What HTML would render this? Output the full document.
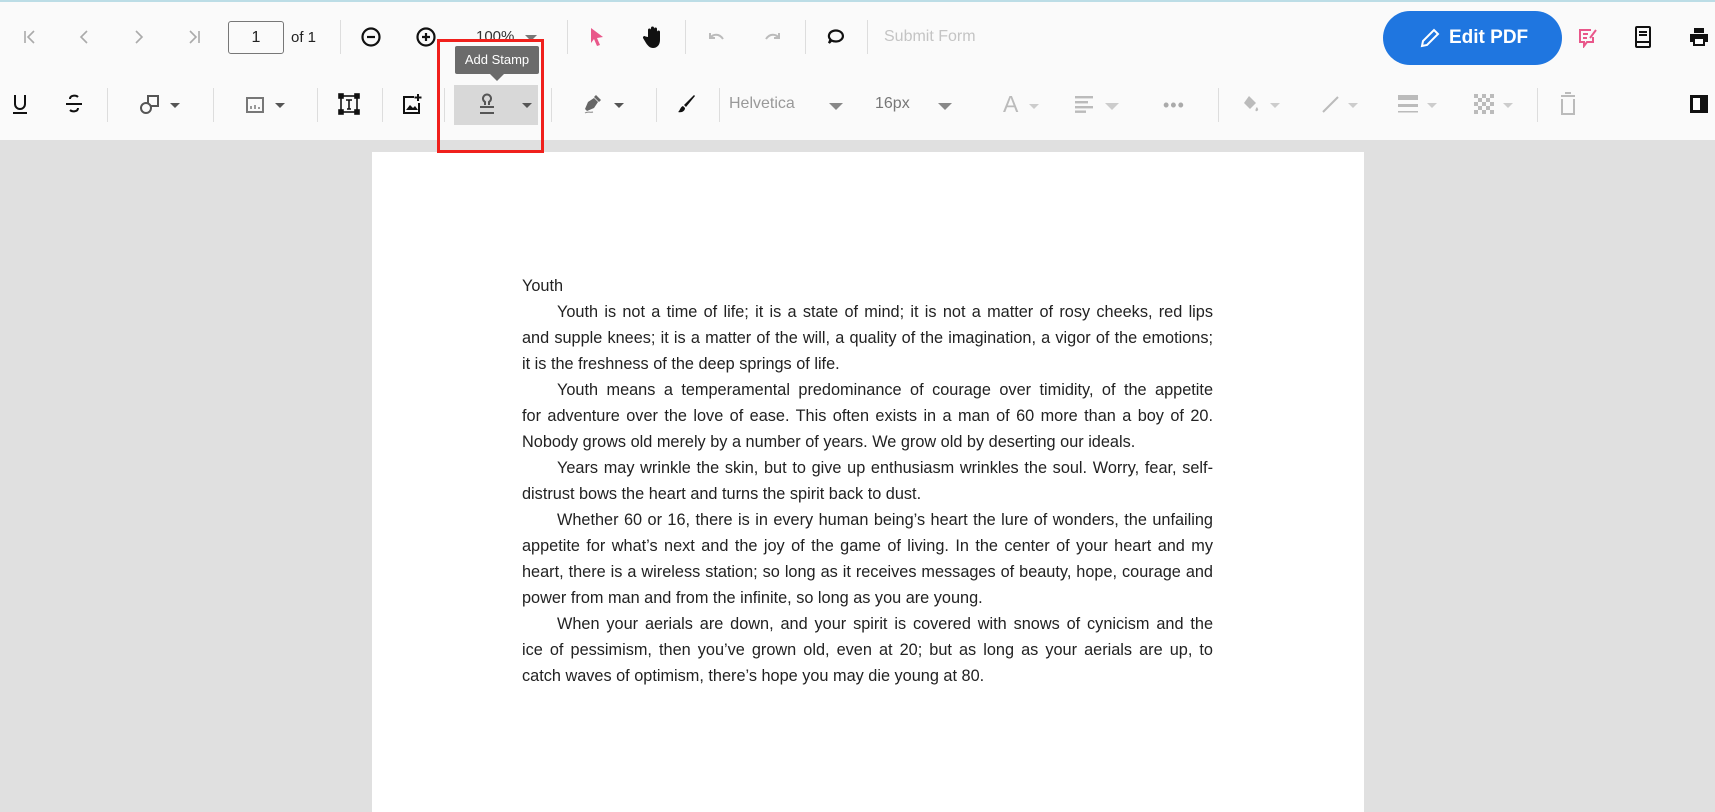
<!DOCTYPE html>
<html><head><meta charset="utf-8"><style>
*{margin:0;padding:0;box-sizing:border-box}
body{width:1715px;height:799px;overflow:hidden;background:#e0e0e0;font-family:"Liberation Sans",sans-serif;position:relative}
.tb{position:absolute;left:0;top:0;width:1715px;height:140px;background:#fafafa;border-top:2px solid #bcdde6}
.a{position:absolute}
.ic{position:absolute;transform:translate(-50%,-50%)}
.sep{position:absolute;width:1px;background:#ddd}
.tri{position:absolute;width:0;height:0;border-left:5px solid transparent;border-right:5px solid transparent;border-top:5px solid #555;transform:translateX(-50%)}
.page{position:absolute;left:372px;top:152px;width:992px;height:660px;background:#fff}
.ln{position:absolute;left:522px;width:691px;font-size:16.3px;color:#222;white-space:nowrap;text-align:justify;text-align-last:justify;line-height:20px}
.ln.l{text-align-last:left}
.ln.i{padding-left:35px}
.grey{color:#aaa}
</style></head><body>
<div class="tb">
<svg class="ic" style="left:30px;top:35px" width="16" height="16" viewBox="0 0 16 16" fill="none" stroke="#aaa" stroke-width="1.6"><path d="M3 2v12M12 2L6 8l6 6"/></svg>
<svg class="ic" style="left:84px;top:35px" width="16" height="16" viewBox="0 0 16 16" fill="none" stroke="#aaa" stroke-width="1.6"><path d="M11 2L5 8l6 6"/></svg>
<svg class="ic" style="left:139px;top:35px" width="16" height="16" viewBox="0 0 16 16" fill="none" stroke="#aaa" stroke-width="1.6"><path d="M5 2l6 6-6 6"/></svg>
<svg class="ic" style="left:194px;top:35px" width="16" height="16" viewBox="0 0 16 16" fill="none" stroke="#aaa" stroke-width="1.6"><path d="M13 2v12M4 2l6 6-6 6"/></svg>
<div class="a" style="left:228px;top:19px;width:56px;height:33px;border:1px solid #777;border-radius:3px;font-size:16px;text-align:center;line-height:31px;color:#222">1</div>
<div class="a" style="left:291px;top:27px;font-size:15px;color:#222">of 1</div>
<div class="sep" style="left:340px;top:18px;height:34px"></div>
<svg class="ic" style="left:371px;top:35px" width="22" height="22" viewBox="0 0 22 22" fill="none" stroke="#111" stroke-width="2.2"><circle cx="11" cy="11" r="8.5"/><path d="M7 11h8"/></svg>
<svg class="ic" style="left:426px;top:35px" width="22" height="22" viewBox="0 0 22 22" fill="none" stroke="#111" stroke-width="2.2"><circle cx="11" cy="11" r="8.5"/><path d="M7 11h8M11 7v8"/></svg>
<div class="a" style="left:476px;top:26px;font-size:15px;color:#333">100%</div>
<div class="tri" style="left:531px;top:33px;border-top-color:#777;border-width:6px 6px 0 6px"></div>
<div class="sep" style="left:567px;top:18px;height:34px"></div>
<svg class="ic" style="left:597px;top:35px" width="18" height="22" viewBox="0 0 18 22"><path d="M3 2l12 9-6 1 3 7-3 1-3-7-3 4z" fill="#e9578a"/></svg>
<svg class="ic" style="left:653px;top:35px" width="22" height="24" viewBox="0 0 22 24"><path d="M6 12V5a1.5 1.5 0 013 0v5V3a1.5 1.5 0 013 0v7V4a1.5 1.5 0 013 0v7V7a1.5 1.5 0 013 0v8c0 5-3 8-7 8-3 0-5-2-7-5l-3-5a1.5 1.5 0 012.5-1.5z" fill="#111"/></svg>
<div class="sep" style="left:685px;top:18px;height:34px"></div>
<svg class="ic" style="left:717px;top:35px" width="20" height="16" viewBox="0 0 20 16" fill="none" stroke="#bbb" stroke-width="2"><path d="M3 4v5h5M3 9c3-4 9-5 13 1"/></svg>
<svg class="ic" style="left:772px;top:35px" width="20" height="16" viewBox="0 0 20 16" fill="none" stroke="#bbb" stroke-width="2"><path d="M17 4v5h-5M17 9c-3-4-9-5-13 1"/></svg>
<div class="sep" style="left:805px;top:18px;height:34px"></div>
<svg class="ic" style="left:836px;top:35px" width="22" height="20" viewBox="0 0 22 20" fill="none" stroke="#111" stroke-width="2.2"><path d="M4 16l1.5-3.5A7 5.5 0 1111 14.5c-2 0-3.5-.5-4.5-1z"/></svg>
<div class="sep" style="left:867px;top:18px;height:34px"></div>
<div class="a grey" style="left:884px;top:26px;font-size:16px;color:#c4c4c4">Submit Form</div>
<div class="a" style="left:1383px;top:9px;width:179px;height:54px;border-radius:27px;background:#1f76e0;color:#fff;font-weight:bold;font-size:19px;line-height:54px;padding-left:66px">Edit PDF</div>
<svg class="ic" style="left:1430px;top:36px" width="24" height="24" viewBox="0 0 24 24" fill="none" stroke="#fff" stroke-width="2"><path d="M4 20l1-5L16 4l4 4L9 19z"/></svg>
<svg class="ic" style="left:1588px;top:35px" width="22" height="22" viewBox="0 0 22 22" fill="none" stroke="#e9578a" stroke-width="2"><path d="M14 4H3v12h4v4l3-4h6v-5M6 8h5M6 12h4M13 12l6-8"/></svg>
<svg class="ic" style="left:1643px;top:35px" width="18" height="24" viewBox="0 0 18 24" fill="none" stroke="#111" stroke-width="2"><rect x="2" y="2" width="14" height="20" rx="1"/><path d="M5 7h8M5 10h8M2 17h14"/></svg>
<svg class="ic" style="left:1699px;top:35px" width="22" height="22" viewBox="0 0 22 22"><path d="M6 2h10v5H6zM2 8h18v8h-3v4H5v-4H2z" fill="#111"/><rect x="7" y="13" width="8" height="5" fill="#fff"/></svg>
<svg class="ic" style="left:20px;top:102px" width="18" height="22" viewBox="0 0 18 22" fill="none" stroke="#111" stroke-width="2"><path d="M4 2v9a5 5 0 0010 0V2M2 20h14"/></svg>
<svg class="ic" style="left:74px;top:102px" width="20" height="22" viewBox="0 0 20 22" fill="none" stroke="#111" stroke-width="2"><path d="M14 4c-2-2-8-2-8 2M2 11h16M6 17c2 2 8 2 8-2"/></svg>
<div class="sep" style="left:107px;top:86px;height:34px"></div>
<svg class="ic" style="left:150px;top:102px" width="22" height="22" viewBox="0 0 22 22" fill="none" stroke="#555" stroke-width="2"><circle cx="7" cy="15" r="5"/><path d="M9 10V3h10v10h-7"/></svg>
<div class="tri" style="left:175px;top:101px"></div>
<div class="sep" style="left:213px;top:86px;height:34px"></div>
<svg class="ic" style="left:255px;top:103px" width="20" height="18" viewBox="0 0 20 18" fill="none" stroke="#777" stroke-width="2"><rect x="2" y="2" width="16" height="14"/><path d="M6 13v-3M10 13V9M14 13v-2" stroke-width="1.5"/></svg>
<div class="tri" style="left:280px;top:101px"></div>
<div class="sep" style="left:317px;top:86px;height:34px"></div>
<svg class="ic" style="left:349px;top:102px" width="22" height="22" viewBox="0 0 22 22" fill="none" stroke="#111" stroke-width="1.6"><rect x="3" y="3" width="16" height="16"/><path d="M8 7h6M11 7v9M9 16h4"/><rect x="1" y="1" width="4" height="4" fill="#111"/><rect x="17" y="1" width="4" height="4" fill="#111"/><rect x="1" y="17" width="4" height="4" fill="#111"/><rect x="17" y="17" width="4" height="4" fill="#111"/></svg>
<div class="sep" style="left:382px;top:86px;height:34px"></div>
<svg class="ic" style="left:412px;top:102px" width="22" height="22" viewBox="0 0 22 22" fill="none" stroke="#111" stroke-width="2"><path d="M13 4H3v16h15V10M17 1v7M13.5 4.5h7"/><path d="M5 17l4-5 3 3 2-2 3 4z" fill="#111" stroke="none"/></svg>
<div class="sep" style="left:444px;top:86px;height:34px"></div>
<div class="a" style="left:454px;top:83px;width:84px;height:40px;background:#d8d8d8"></div>
<svg class="ic" style="left:487px;top:102px" width="20" height="22" viewBox="0 0 20 22" fill="none" stroke="#555" stroke-width="2"><path d="M8 12V9a4 4 0 114 0v3M3 14h14M3 20h14"/></svg>
<div class="tri" style="left:527px;top:101px"></div>
<div class="sep" style="left:551px;top:86px;height:34px"></div>
<svg class="ic" style="left:592px;top:102px" width="22" height="22" viewBox="0 0 22 22" fill="#666"><path d="M4 16l3-7 6-4 4 4-4 6-7 3zM13 4l2-2 5 5-2 2z"/><path d="M4 20c3-2 5 0 8-1" stroke="#888" fill="none"/></svg>
<div class="tri" style="left:619px;top:101px"></div>
<div class="sep" style="left:656px;top:86px;height:34px"></div>
<svg class="ic" style="left:686px;top:102px" width="22" height="22" viewBox="0 0 22 22"><path d="M19 2l1 1-9 11-2-2z" fill="#111"/><path d="M8 13l2 2c0 3-3 5-7 4 2-1 2-5 5-6z" fill="#111"/></svg>
<div class="sep" style="left:719px;top:86px;height:34px"></div>
<div class="a" style="left:729px;top:93px;font-size:16px;color:#999">Helvetica</div>
<div class="tri" style="left:836px;top:101px;border-top-color:#888;border-width:7px 7px 0 7px"></div>
<div class="a" style="left:875px;top:93px;font-size:16px;color:#777">16px</div>
<div class="tri" style="left:945px;top:101px;border-top-color:#888;border-width:7px 7px 0 7px"></div>
<div class="a" style="left:1003px;top:89px;font-size:23px;color:#bbb">A</div>
<div class="tri" style="left:1034px;top:102px;border-top-color:#ccc"></div>
<svg class="ic" style="left:1084px;top:102px" width="20" height="18" viewBox="0 0 20 18" fill="#bbb"><rect x="1" y="1" width="18" height="2.4"/><rect x="1" y="6" width="13" height="2.4"/><rect x="1" y="11" width="18" height="2.4"/><rect x="1" y="15.5" width="11" height="2.4"/></svg>
<div class="tri" style="left:1112px;top:101px;border-top-color:#ccc;border-width:7px 7px 0 7px"></div>
<div class="a" style="left:1163px;top:93px;font-size:18px;color:#aaa;letter-spacing:1px">•••</div>
<div class="sep" style="left:1218px;top:86px;height:34px"></div>
<svg class="ic" style="left:1251px;top:102px" width="20" height="20" viewBox="0 0 20 20" fill="#bbb"><path d="M8 2l7 7-6 6-6-6z"/><path d="M16 13c1 2 2 3 0 4s-2-2 0-4z"/></svg>
<div class="tri" style="left:1275px;top:101px;border-top-color:#ccc"></div>
<svg class="ic" style="left:1331px;top:102px" width="20" height="20" viewBox="0 0 20 20" fill="none" stroke="#bbb" stroke-width="2"><path d="M2 18L17 3"/></svg>
<div class="tri" style="left:1353px;top:101px;border-top-color:#ccc"></div>
<svg class="ic" style="left:1408px;top:102px" width="22" height="22" viewBox="0 0 22 22" fill="#bbb"><rect x="1" y="2" width="20" height="5"/><rect x="1" y="11" width="20" height="3"/><rect x="1" y="18" width="20" height="1.5"/></svg>
<div class="tri" style="left:1432px;top:101px;border-top-color:#ccc"></div>
<svg class="ic" style="left:1484px;top:102px" width="20" height="20" viewBox="0 0 20 20" fill="#bbb"><path d="M0 0h4v4H0zM8 0h4v4H8zM16 0h4v4h-4zM4 4h4v4H4zM12 4h4v4h-4zM0 8h4v4H0zM8 8h4v4H8zM16 8h4v4h-4zM4 12h4v4H4zM12 12h4v4h-4zM0 16h4v4H0zM8 16h4v4H8zM16 16h4v4h-4z"/></svg>
<div class="tri" style="left:1508px;top:101px;border-top-color:#ccc"></div>
<div class="sep" style="left:1537px;top:86px;height:34px"></div>
<svg class="ic" style="left:1568px;top:102px" width="18" height="24" viewBox="0 0 18 24" fill="none" stroke="#bbb" stroke-width="2"><path d="M2 4h14M6 1h6M3 7v15h12V7"/></svg>
<svg class="ic" style="left:1699px;top:102px" width="20" height="20" viewBox="0 0 20 20"><rect x="1" y="1" width="18" height="18" fill="#111"/><rect x="4" y="4" width="7" height="12" fill="#fff"/></svg>
<div class="a" style="left:455px;top:44px;width:84px;height:28px;background:#6b6b6b;color:#fff;font-size:13px;line-height:28px;text-align:center;border-radius:2px">Add Stamp</div>
<div class="a" style="left:490px;top:72px;width:0;height:0;border-left:7px solid transparent;border-right:7px solid transparent;border-top:7px solid #6b6b6b"></div>
</div>
<div class="a" style="left:437px;top:39px;width:107px;height:114px;border:3px solid #f0201c;z-index:5"></div>
<div class="page"></div>
<div class="ln l" style="top:276px">Youth</div>
<div class="ln i" style="top:302px">Youth is not a time of life; it is a state of mind; it is not a matter of rosy cheeks, red lips</div>
<div class="ln" style="top:328px">and supple knees; it is a matter of the will, a quality of the imagination, a vigor of the emotions;</div>
<div class="ln l" style="top:354px">it is the freshness of the deep springs of life.</div>
<div class="ln i" style="top:380px">Youth means a temperamental predominance of courage over timidity, of the appetite</div>
<div class="ln" style="top:406px">for adventure over the love of ease. This often exists in a man of 60 more than a boy of 20.</div>
<div class="ln l" style="top:432px">Nobody grows old merely by a number of years. We grow old by deserting our ideals.</div>
<div class="ln i" style="top:458px">Years may wrinkle the skin, but to give up enthusiasm wrinkles the soul. Worry, fear, self-</div>
<div class="ln l" style="top:484px">distrust bows the heart and turns the spirit back to dust.</div>
<div class="ln i" style="top:510px">Whether 60 or 16, there is in every human being’s heart the lure of wonders, the unfailing</div>
<div class="ln" style="top:536px">appetite for what’s next and the joy of the game of living. In the center of your heart and my</div>
<div class="ln" style="top:562px">heart, there is a wireless station; so long as it receives messages of beauty, hope, courage and</div>
<div class="ln l" style="top:588px">power from man and from the infinite, so long as you are young.</div>
<div class="ln i" style="top:614px">When your aerials are down, and your spirit is covered with snows of cynicism and the</div>
<div class="ln" style="top:640px">ice of pessimism, then you’ve grown old, even at 20; but as long as your aerials are up, to</div>
<div class="ln l" style="top:666px">catch waves of optimism, there’s hope you may die young at 80.</div>
</body></html>
